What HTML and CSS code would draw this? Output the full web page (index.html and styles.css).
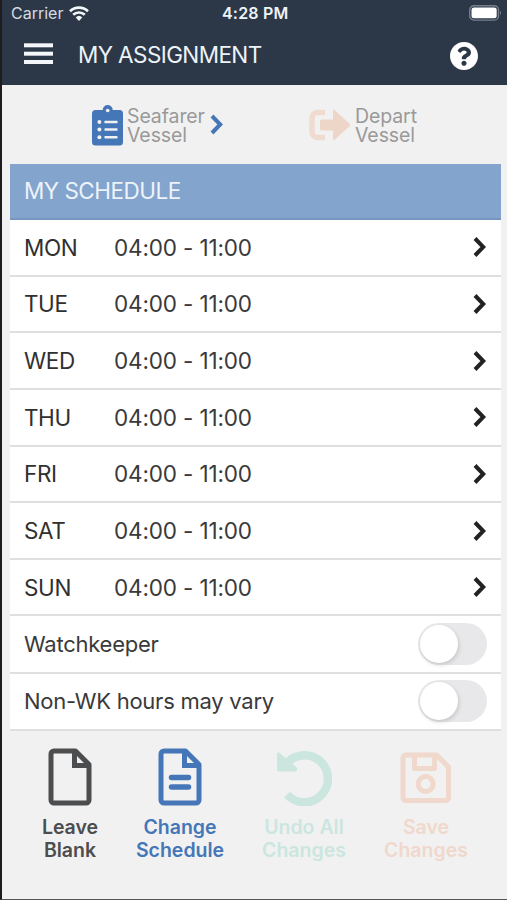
FILE: index.html
```
<!DOCTYPE html>
<html lang="en">
<head>
    <meta charset="UTF-8">
    <meta name="viewport" content="width=device-width, initial-scale=1.0">
    <title>My Assignment</title>
    <link rel="stylesheet" href="styles.css">
</head>
<body>

    <!-- Header Section -->
    <header class="header">
        <div class="status">
            <div class="carrier">
                <span>Carrier</span>
                <svg width="20" height="15" viewBox="0 0 20 15" fill="none" stroke="#f3f6f9" stroke-width="2.7">
                    <path d="M1 5.3a13 13 0 0 1 18 0M4.2 8.8a8.4 8.4 0 0 1 11.6 0"/>
                    <path d="M10 15l-3.3-3.6a4.8 4.8 0 0 1 6.6 0z" fill="#f3f6f9" stroke="none"/>
                </svg>
            </div>
            <span class="time">4:28 PM</span>
            <svg class="battery" width="33" height="16" viewBox="0 0 33 16">
                <rect x=".7" y=".7" width="28.8" height="14.4" rx="4.2" fill="none" stroke="#76808b" stroke-width="1.4"/>
                <rect x="2.5" y="2.6" width="25.2" height="10.7" rx="2.5" fill="#fff"/>
                <path d="M31 5.5q2 2.4 0 4.8z" fill="#76808b"/>
            </svg>
        </div>
        <div class="titlebar">
            <svg class="menu" width="29" height="22" viewBox="0 0 29 22" fill="#f5f6fa">
                <rect y="0.300" width="29" height="4"/>
                <rect y="8.700" width="29" height="4"/>
                <rect y="17" width="29" height="4"/>
            </svg>
            <h1>MY ASSIGNMENT</h1>
            <svg class="help" width="28" height="28" viewBox="8 8 496 496" fill="#fff">
                <path d="M504 256c0 136.997-111.043 248-248 248S8 392.997 8 256C8 119.083 119.043 8 256 8s248 111.083 248 248zM262.655 90c-54.497 0-89.255 22.957-116.549 63.758-3.536 5.286-2.353 12.415 2.715 16.258l34.699 26.31c5.205 3.947 12.621 3.008 16.665-2.122 17.864-22.658 30.113-35.797 57.303-35.797 20.429 0 45.698 13.148 45.698 32.958 0 14.976-12.363 22.667-32.534 33.976C247.128 238.528 216 254.941 216 296v4c0 6.627 5.373 12 12 12h56c6.627 0 12-5.373 12-12v-1.333c0-28.462 83.186-29.647 83.186-106.667 0-58.002-60.165-102-116.531-102zM256 338c-25.365 0-46 20.635-46 46 0 25.364 20.635 46 46 46s46-20.636 46-46c0-25.364-20.635-46-46-46z"/>
            </svg>
        </div>
    </header>

    <!-- Vessel Tabs -->
    <nav class="tabs">
        <div class="tab seafarer">
            <svg width="32" height="41" viewBox="0 0 32 41">
                <path d="M4 5h6.7a5 5 0 0 1 10 0H27.500a3.500 3.500 0 0 1 3.500 3.500V37a3.500 3.500 0 0 1-3.500 3.500H3.500A3.500 3.500 0 0 1 0 37V8.500A3.500 3.500 0 0 1 3.500 5z" fill="#4577b8"/>
                <circle cx="15.700" cy="5.500" r="1.800" fill="#f1f1f1"/>
                <g fill="#f1f1f1">
                    <circle cx="7.400" cy="17" r="2"/>
                    <circle cx="7.400" cy="24.500" r="2"/>
                    <circle cx="7.400" cy="32.300" r="2"/>
                    <rect x="12.500" y="15.700" width="13" height="2.600" rx=".6"/>
                    <rect x="12.500" y="23.200" width="13" height="2.600" rx=".6"/>
                    <rect x="12.500" y="31" width="13" height="2.600" rx=".6"/>
                </g>
            </svg>
            <p>Seafarer<br>Vessel</p>
            <svg class="next" width="13" height="21" viewBox="0 0 13 21" fill="none" stroke="#4577b8" stroke-width="4">
                <path d="M2 2l8.200 8.500L2 19"/>
            </svg>
        </div>
        <div class="tab depart">
            <svg width="42" height="32" viewBox="0 0 42 32">
                <path d="M16 3.500H8.500A5.500 5.500 0 0 0 3 9v14a5.500 5.500 0 0 0 5.500 5.500H16" fill="none" stroke="#f0dbd0" stroke-width="5.500"/>
                <path d="M12.500 10.500H24V2q0-2 1.700-.7L40.500 14.800q1.400 1.200 0 2.400L25.700 30.700Q24 32 24 30v-8.500H12.500q-1.500 0-1.500-1.500v-8q0-1.500 1.500-1.500z" fill="#edd5c8"/>
            </svg>
            <p>Depart<br>Vessel</p>
        </div>
    </nav>

    <!-- Schedule Section -->
    <main class="schedule">
        <h2>MY SCHEDULE</h2>
        <div class="row"><span class="day">MON</span><span class="hours">04:00 - 11:00</span><svg class="chevron" viewBox="0 0 13 20"><path d="M2 1.500l8.300 8.500L2 18.500"/></svg></div>
        <div class="row"><span class="day">TUE</span><span class="hours">04:00 - 11:00</span><svg class="chevron" viewBox="0 0 13 20"><path d="M2 1.500l8.300 8.500L2 18.500"/></svg></div>
        <div class="row"><span class="day">WED</span><span class="hours">04:00 - 11:00</span><svg class="chevron" viewBox="0 0 13 20"><path d="M2 1.500l8.300 8.500L2 18.500"/></svg></div>
        <div class="row"><span class="day">THU</span><span class="hours">04:00 - 11:00</span><svg class="chevron" viewBox="0 0 13 20"><path d="M2 1.500l8.300 8.500L2 18.500"/></svg></div>
        <div class="row"><span class="day">FRI</span><span class="hours">04:00 - 11:00</span><svg class="chevron" viewBox="0 0 13 20"><path d="M2 1.500l8.300 8.500L2 18.500"/></svg></div>
        <div class="row"><span class="day">SAT</span><span class="hours">04:00 - 11:00</span><svg class="chevron" viewBox="0 0 13 20"><path d="M2 1.500l8.300 8.500L2 18.500"/></svg></div>
        <div class="row"><span class="day">SUN</span><span class="hours">04:00 - 11:00</span><svg class="chevron" viewBox="0 0 13 20"><path d="M2 1.500l8.300 8.500L2 18.500"/></svg></div>
        <div class="row option"><span>Watchkeeper</span><div class="toggle"></div></div>
        <div class="row option"><span>Non-WK hours may vary</span><div class="toggle"></div></div>
    </main>

    <!-- Action Buttons -->
    <footer class="actions">
        <div class="action leave">
            <svg width="44" height="58" viewBox="0 0 44 58" fill="none" stroke="currentColor" stroke-width="5" stroke-linejoin="round">
                <path d="M6 3h21.500L41 16.500V52a3 3 0 0 1-3 3H6a3 3 0 0 1-3-3V6a3 3 0 0 1 3-3z"/>
                <path d="M26.500 4v13.500H40" stroke-linejoin="miter"/>
            </svg>
            <p>Leave<br>Blank</p>
        </div>
        <div class="action change">
            <svg width="44" height="58" viewBox="0 0 44 58" fill="none" stroke="currentColor" stroke-width="5" stroke-linejoin="round">
                <path d="M6 3h21.500L41 16.500V52a3 3 0 0 1-3 3H6a3 3 0 0 1-3-3V6a3 3 0 0 1 3-3z"/>
                <path d="M26.500 4v13.500H40" stroke-linejoin="miter"/>
                <path d="M13.500 29.500h17M13.500 39h17" stroke-width="5.500" stroke-linecap="round"/>
            </svg>
            <p>Change<br>Schedule</p>
        </div>
        <div class="action undo">
            <svg width="56" height="58" viewBox="0 0 56 58">
                <path d="M9 17.500A23.500 23.500 0 1 1 11 46.500" fill="none" stroke="currentColor" stroke-width="8.500"/>
                <path d="M1 6q.5-3 3-.7L20 19q2.500 3-.5 4.500H3q-2 0-2-2z" fill="currentColor"/>
            </svg>
            <p>Undo All<br>Changes</p>
        </div>
        <div class="action save">
            <svg width="52" height="58" viewBox="0 0 52 58" fill="none" stroke="currentColor" stroke-width="5" stroke-linejoin="round">
                <path d="M6 7h30.500L48.500 19v30.500a3 3 0 0 1-3 3H6a3 3 0 0 1-3-3V10a3 3 0 0 1 3-3z"/>
                <path d="M14.500 8v12.500h20V8"/>
                <circle cx="25.700" cy="36" r="7.500"/>
            </svg>
            <p>Save<br>Changes</p>
        </div>
    </footer>

</body>
</html>
```
FILE: styles.css
```
/* CSS styles */
* { box-sizing: border-box; }
body { font-family: Inter, "Liberation Sans", sans-serif; margin: 0; height: 900px; background: #f1f1f1; color: #3a3a3a; border-left: 2px solid #1c1c1f; border-bottom: 1px solid #555; overflow: hidden; }
h1, h2, p { margin: 0; font-weight: 400; }
svg { display: block; flex: none; }

.header { height: 85px; background: #2c3848; color: #eef3f8; }
.status { display: flex; align-items: center; height: 26px; padding: 0 5px 0 9px; }
.carrier { display: flex; align-items: center; gap: 6px; width: 211px; font-size: 16px; color: #d5dbe2; }
.time { flex: 1; font-size: 16px; font-weight: 600; letter-spacing: 0.2px; }
.titlebar { display: flex; align-items: center; height: 59px; padding: 0 29.500px 0 22px; }
.menu { margin: -4px 25px 0 0; }
.titlebar h1 { flex: 1; font-size: 22.500px; letter-spacing: -0.6px; margin-top: -2px; }

.tabs { display: flex; height: 79px; padding: 20px 0 0 90px; }
.tab { display: flex; color: #999; font-size: 19.500px; letter-spacing: -0.1px; line-height: 19px; }
.tab p { margin: 2px 0 0 3px; }
.seafarer { width: 217px; }
.next { margin: 9px 0 0 5px; }
.depart svg { margin-top: 4px; }
.depart p { margin-left: 4px; }

.schedule { margin: 0 6px 0 8px; }
.schedule h2 { height: 56px; padding-left: 14px; line-height: 54px; font-size: 22.500px; letter-spacing: -0.5px; color: #edf3fb; background: #83a4cc; border-bottom: 2px solid #7596bf; }
.row { display: flex; align-items: center; height: 56.65px; padding: 0 15px 0 14px; background: #fff; border-bottom: 2px solid #dfdfdf; font-size: 22.500px; letter-spacing: -0.15px; }
.day { width: 90px; color: #303030; letter-spacing: -0.4px; }
.hours { flex: 1; }
.chevron { width: 13px; height: 20px; fill: none; stroke: #222; stroke-width: 4; }
.option { height: 57.2px; padding-right: 14px; justify-content: space-between; font-size: 22px; letter-spacing: -0.25px; }
.toggle { width: 69px; height: 42px; padding: 2px; border-radius: 21px; background: #e8e8ea; }
.toggle::before { content: ""; display: block; width: 38px; height: 38px; border-radius: 50%; background: #fff; box-shadow: 1px 2px 4px rgba(0, 0, 0, .15); }

.actions { display: flex; padding-top: 17px; text-align: center; }
.action { display: flex; flex-direction: column; align-items: center; font-size: 19.500px; line-height: 23.500px; }
.action p { margin-top: 10px; font-weight: 600; }
.leave { width: 136px; color: #4c4d4e; }
.change { width: 84px; color: #4577b8; }
.undo { width: 164px; color: #cbe6df; }
.save { width: 80px; color: #f0d8cc; }
```
